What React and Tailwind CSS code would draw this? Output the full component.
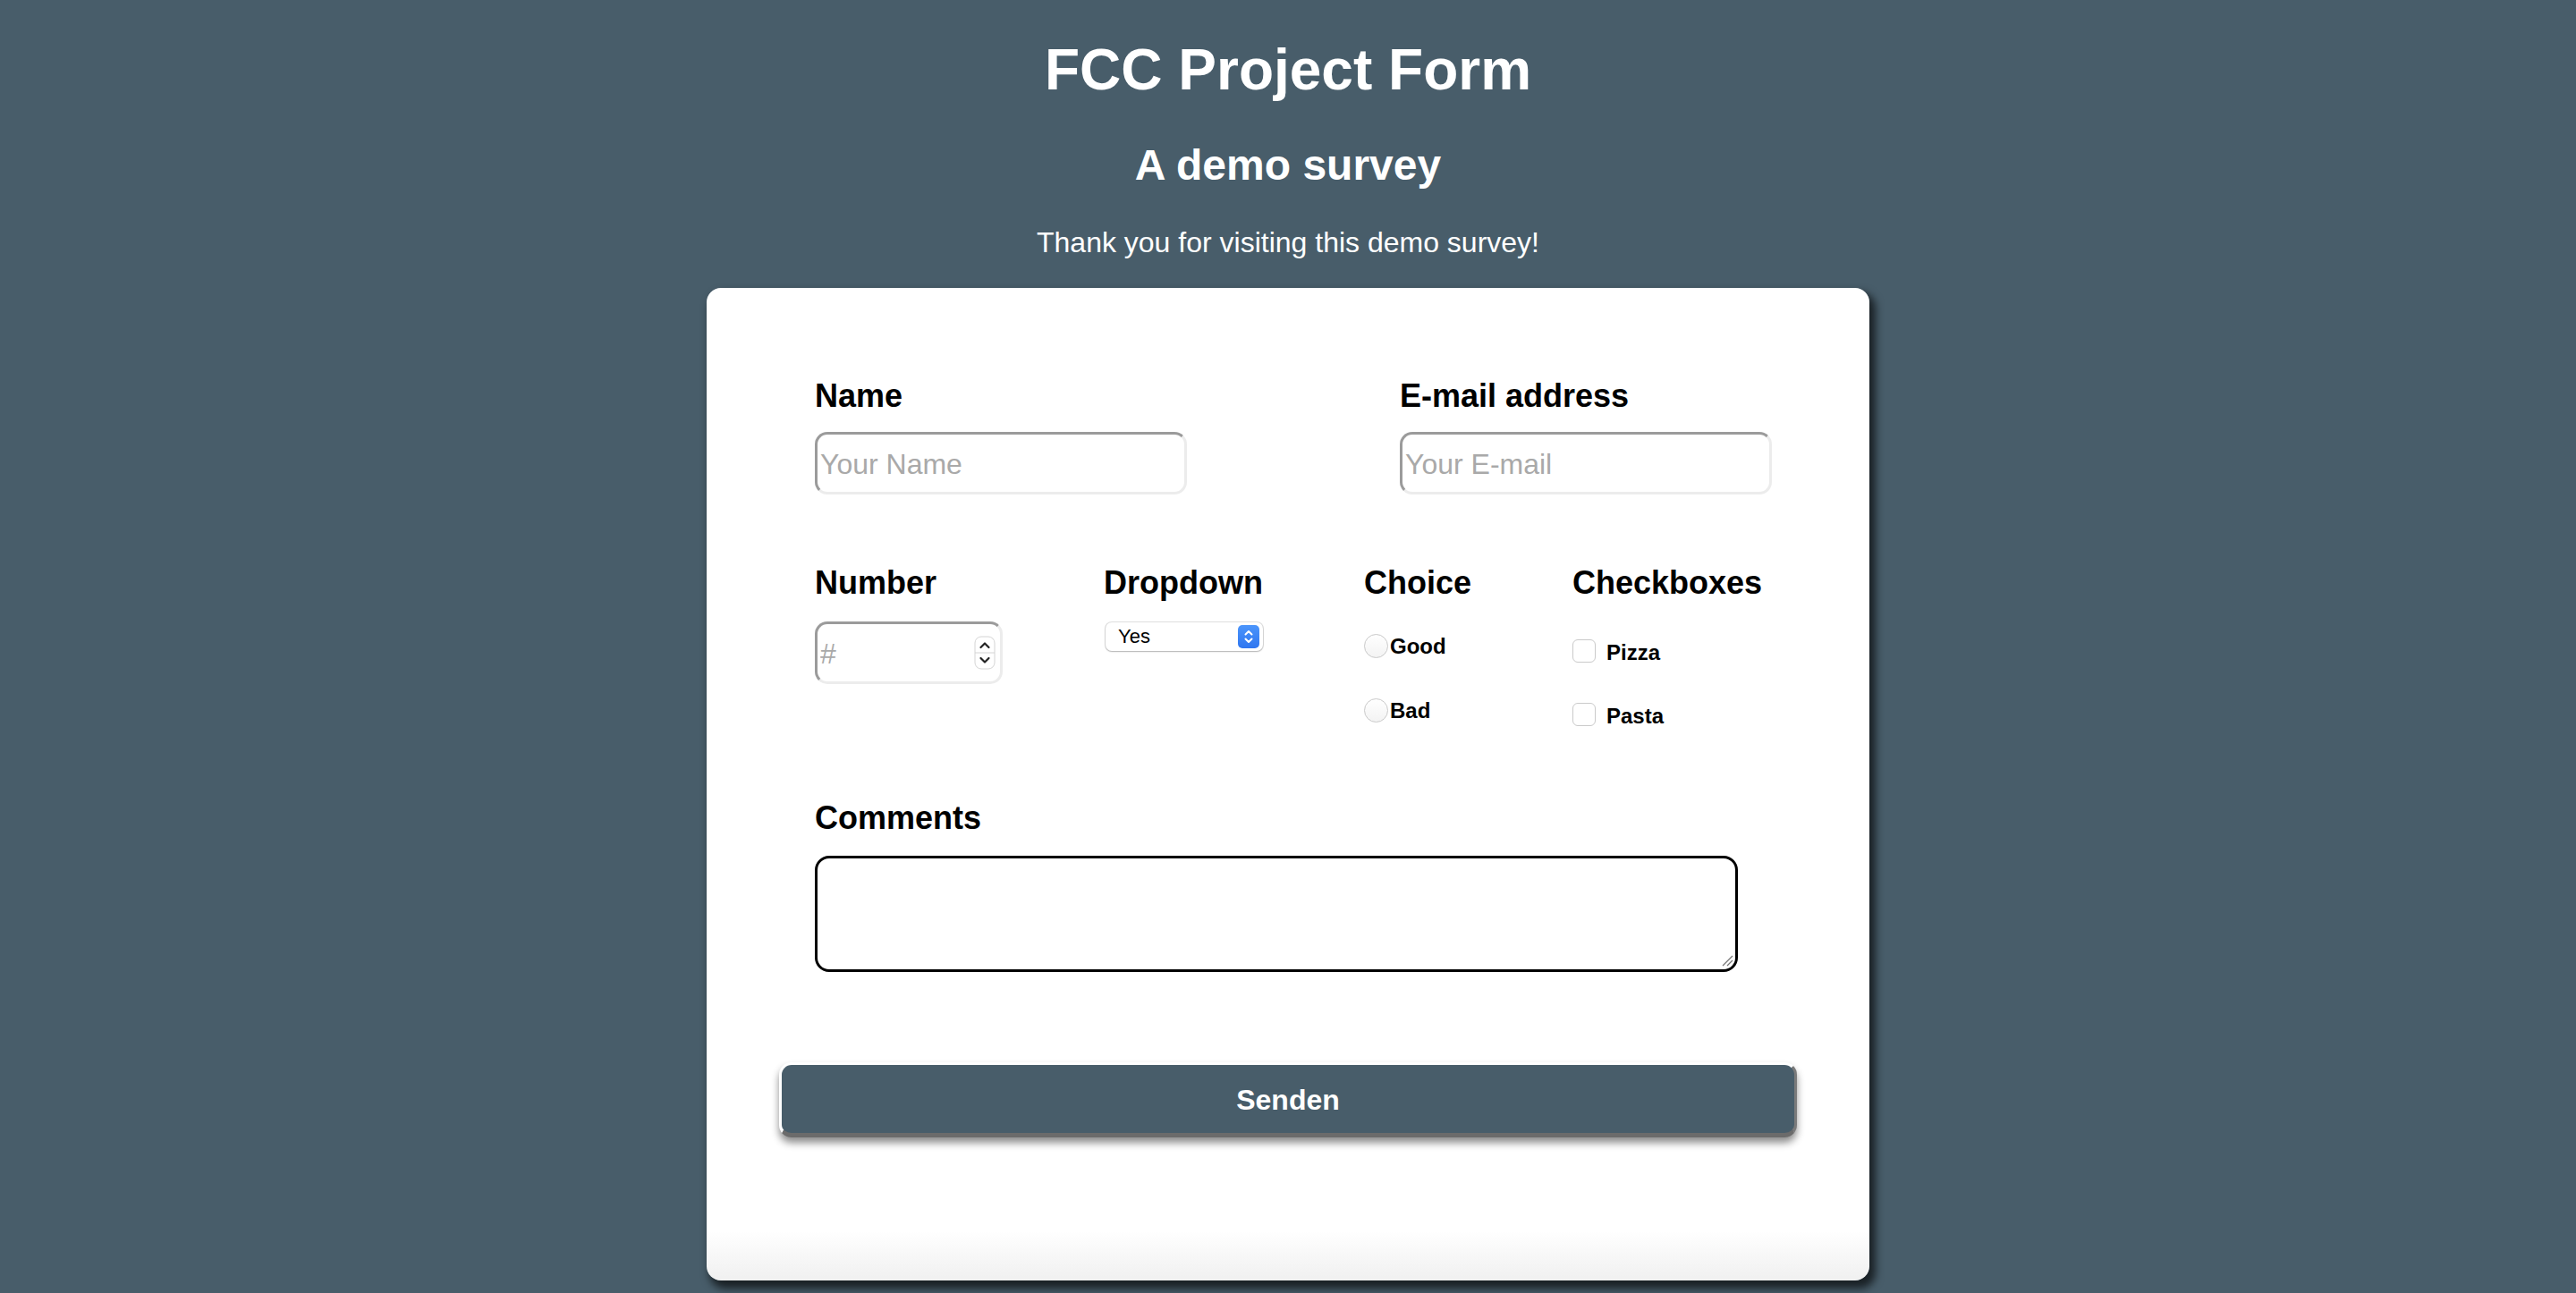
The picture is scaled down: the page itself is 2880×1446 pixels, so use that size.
import React from "react";

const font = { fontFamily: '"Liberation Sans", Arial, Helvetica, sans-serif' };

function Label({ children }) {
  return <div className="text-[36px] leading-[41px] font-bold text-black pt-[2px] -mb-[2px]">{children}</div>;
}

function TextBox({ placeholder }) {
  return (
    <div className="w-[416px] h-[70px] rounded-[14px] border-[3px] border-solid border-t-[#9b9b9b] border-l-[#9b9b9b] border-b-[#ececec] border-r-[#ececec] bg-white flex items-center overflow-hidden">
      <input
        type="text"
        placeholder={placeholder}
        className="w-full h-full bg-transparent outline-none pl-[3px] pt-[2px] text-[32px] text-black placeholder:text-[#a9a9a9]"
        style={font}
      />
    </div>
  );
}

function Radio({ label }) {
  return (
    <div className="flex items-center h-[27px]">
      <span className="w-[27px] h-[27px] rounded-full border border-[#c9c9c9] bg-linear-to-b from-white to-[#f3f3f3] shrink-0" />
      <span className="ml-[2px] text-[24px] font-bold text-black leading-none">{label}</span>
    </div>
  );
}

function Check({ label }) {
  return (
    <div className="flex items-center h-[26px]">
      <span className="w-[26px] h-[26px] rounded-[6px] border border-[#cacaca] bg-white shrink-0" />
      <span className="ml-[12px] text-[24px] font-bold text-black leading-none mt-[4px]">{label}</span>
    </div>
  );
}

export default function App() {
  return (
    <div className="min-h-screen w-full bg-[#485d6a] flex flex-col items-center" style={font}>
      <h1 className="mt-[41px] text-[64px] leading-[74px] font-bold text-white">FCC Project Form</h1>
      <h2 className="mt-[42px] text-[48px] leading-[55px] font-bold text-white">A demo survey</h2>
      <p className="mt-[41px] text-[32px] leading-[37px] text-white">Thank you for visiting this demo survey!</p>

      <div className="mt-[32px] w-[1300px] rounded-[16px] bg-linear-to-b from-white from-[95%] to-[#f0f0f0] shadow-[5px_7px_10px_2px_rgba(0,0,0,0.65)] pt-[98px] pb-[160px]">
        <div className="pl-[121px]">
          {/* Row 1 */}
          <div className="flex">
            <div className="w-[654px]">
              <Label>Name</Label>
              <div className="mt-[22px]">
                <TextBox placeholder="Your Name" />
              </div>
            </div>
            <div>
              <Label>E-mail address</Label>
              <div className="mt-[22px]">
                <TextBox placeholder="Your E-mail" />
              </div>
            </div>
          </div>

          {/* Row 2 */}
          <div className="flex items-start mt-[76px] h-[183px]">
            <div className="w-[323px]">
              <Label>Number</Label>
              <div className="mt-[25px] w-[210px] h-[70px] rounded-[14px] border-[3px] border-solid border-t-[#9b9b9b] border-l-[#9b9b9b] border-b-[#ececec] border-r-[#ececec] bg-white flex items-center overflow-hidden">
                <input
                  type="text"
                  placeholder="#"
                  className="flex-1 min-w-0 h-full bg-transparent outline-none pl-[3px] pt-[2px] text-[32px] placeholder:text-[#a9a9a9]"
                  style={font}
                />
                <svg width="24" height="38" viewBox="0 0 24 38" className="mr-[5px] shrink-0">
                  <rect x="1" y="1" width="22" height="36" rx="7" fill="#fff" stroke="#d4d4d4" />
                  <line x1="1" y1="19" x2="23" y2="19" stroke="#d4d4d4" />
                  <path d="M7.5 13 L12 8.5 L16.5 13" fill="none" stroke="#222" strokeWidth="2.2" strokeLinecap="round" strokeLinejoin="round" />
                  <path d="M7.5 25 L12 29.5 L16.5 25" fill="none" stroke="#222" strokeWidth="2.2" strokeLinecap="round" strokeLinejoin="round" />
                </svg>
              </div>
            </div>

            <div className="w-[291px]">
              <Label>Dropdown</Label>
              <div className="mt-[26px] ml-[2px] w-[176px] h-[32px] rounded-[7px] bg-white shadow-[0_0_0_1px_rgba(0,0,0,0.12),0_1px_2px_rgba(0,0,0,0.2)] flex items-center justify-between pl-[14px] pr-[4px]">
                <span className="text-[22px] text-black leading-none">Yes</span>
                <svg width="24" height="26" viewBox="0 0 24 26">
                  <defs>
                    <linearGradient id="bl" x1="0" y1="0" x2="0" y2="1">
                      <stop offset="0" stopColor="#4b95fb" />
                      <stop offset="1" stopColor="#2f76f0" />
                    </linearGradient>
                  </defs>
                  <rect x="0" y="0" width="24" height="26" rx="5" fill="url(#bl)" />
                  <path d="M8.5 10.5 L12 7 L15.5 10.5" fill="none" stroke="#fff" strokeWidth="2" strokeLinecap="round" strokeLinejoin="round" />
                  <path d="M8.5 15.5 L12 19 L15.5 15.5" fill="none" stroke="#fff" strokeWidth="2" strokeLinecap="round" strokeLinejoin="round" />
                </svg>
              </div>
            </div>

            <div className="w-[233px]">
              <Label>Choice</Label>
              <div className="mt-[39px] flex flex-col gap-[45px]">
                <Radio label="Good" />
                <Radio label="Bad" />
              </div>
            </div>

            <div>
              <Label>Checkboxes</Label>
              <div className="mt-[45px] flex flex-col gap-[45px]">
                <Check label="Pizza" />
                <Check label="Pasta" />
              </div>
            </div>
          </div>

          {/* Row 3 */}
          <div className="mt-[80px]">
            <Label>Comments</Label>
            <div className="relative mt-[24px] w-[1032px] h-[130px]">
              <textarea
                className="block w-full h-full rounded-[16px] border-[3px] border-solid border-black bg-white outline-none text-[28px] p-[6px] resize-none"
                style={font}
              />
              <svg width="14" height="14" viewBox="0 0 14 14" className="absolute right-[5px] bottom-[6px] pointer-events-none">
                <line x1="2" y1="13" x2="13" y2="2" stroke="#777" strokeWidth="1.3" />
                <line x1="7" y1="13" x2="13" y2="7" stroke="#777" strokeWidth="1.3" />
              </svg>
            </div>
          </div>
        </div>

        {/* Button */}
        <div className="px-[81px] mt-[101px]">
          <button
            type="button"
            className="w-full h-[84px] rounded-[14px] bg-[#485d6a] border-solid border-t-[3px] border-l-[3px] border-b-[5px] border-r-[3px] border-t-white border-l-white border-b-[#6b6b6b] border-r-[#7a7a7a] shadow-[0_6px_8px_rgba(0,0,0,0.45)] text-white text-[32px] font-bold pt-[2px]"
            style={font}
          >
            Senden
          </button>
        </div>
      </div>
    </div>
  );
}
